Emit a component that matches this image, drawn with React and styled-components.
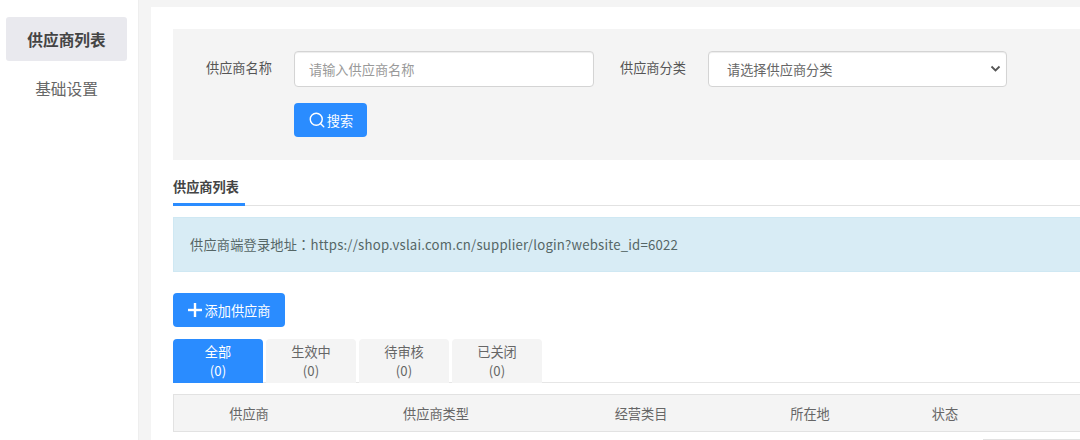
import React from "react";
import styled, { createGlobalStyle } from "styled-components";
import { Search } from "lucide-react";

const Global = createGlobalStyle`
  html, body {
    margin: 0;
    padding: 0;
    background: #f4f4f4;
    overflow: hidden;
  }
  * { box-sizing: border-box; }
`;

const Page = styled.div`
  display: flex;
  width: 1080px;
  height: 440px;
  overflow: hidden;
  font-family: "Noto Sans CJK SC", "Liberation Sans", sans-serif;
  color: #555;
`;

const Sidebar = styled.nav`
  flex: 0 0 139px;
  background: #fff;
  border-right: 1px solid #eee;
  padding: 17px 11px 0 6px;
`;

const NavItem = styled.div`
  height: 44px;
  margin-bottom: 5px;
  display: flex;
  align-items: center;
  justify-content: center;
  border-radius: 3px;
  font-size: 15.7px;
  font-weight: ${(p) => (p.$active ? 700 : 400)};
  color: ${(p) => (p.$active ? "#444" : "#666")};
  background: ${(p) => (p.$active ? "#e9e9ee" : "transparent")};
`;

const Main = styled.main`
  flex: 1;
  margin: 7px 0 0 12px;
  padding: 22px 0 0 22px;
  background: #fff;
  overflow: hidden;
`;

const FilterBox = styled.section`
  height: 131px;
  background: #f4f4f4;
  padding: 22px 0 0 33px;
`;

const FilterRow = styled.div`
  display: flex;
  align-items: center;
`;

const Label = styled.label`
  font-size: 13.2px;
  color: #555;
  width: ${(p) => p.$width}px;
  padding-left: ${(p) => p.$indent || 0}px;
  margin-top: -3px;
`;

const Field = styled.div`
  height: 36px;
  width: ${(p) => p.$width}px;
  background: #fff;
  border: 1px solid #d4d4d4;
  border-radius: 4px;
  box-shadow: inset 0 1px 1px rgba(0, 0, 0, 0.075);
  display: flex;
  align-items: center;
  font-size: 13.2px;
  padding: 0 ${(p) => p.$right || 14}px 0 ${(p) => p.$left}px;
  color: ${(p) => p.$color};
  justify-content: space-between;
`;

const PrimaryButton = styled.button`
  display: flex;
  align-items: center;
  justify-content: center;
  gap: ${(p) => p.$gap}px;
  width: ${(p) => p.$width}px;
  height: 34px;
  padding: 0;
  border: none;
  border-radius: 4px;
  background: #2a8cff;
  color: #fff;
  font-family: inherit;
  font-size: 13.2px;
`;

const SearchRow = styled.div`
  margin: 16px 0 0 88px;
`;

const TabBar = styled.div`
  height: 46px;
  border-bottom: 1px solid #e2e2e2;
  display: flex;
  align-items: flex-end;
`;

const Tab = styled.div`
  width: 72px;
  height: 33px;
  margin-bottom: -1px;
  border-bottom: 3px solid #2a8cff;
  font-size: 13.2px;
  font-weight: 700;
  color: #444;
  padding-top: 4px;
`;

const Notice = styled.div`
  height: 55px;
  margin-top: 11px;
  background: #d8ecf5;
  border: 1px solid #cfe8f3;
  border-right: none;
  padding-left: 16px;
  display: flex;
  align-items: center;
  font-size: 13.2px;
  color: #566;
  letter-spacing: 0.2px;
`;

// the colon sits in the middle of its cell in the reference, as in the JP cut
const Colon = styled.span`
  font-family: "Noto Sans CJK JP", sans-serif;
`;

const AddRow = styled.div`
  margin-top: 21px;
`;

const StatusTabs = styled.div`
  display: flex;
  gap: 3px;
  height: 44px;
  margin-top: 12px;
  border-bottom: 1px solid #e6e6e6;
`;

const StatusTab = styled.div`
  width: 90px;
  height: 44px;
  border-radius: 4px 4px 0 0;
  background: ${(p) => (p.$active ? "#2a8cff" : "#f4f4f4")};
  color: ${(p) => (p.$active ? "#fff" : "#666")};
  font-size: 13.2px;
  line-height: 19px;
  text-align: center;
  padding-top: 3px;
`;

const HeaderRow = styled.div`
  display: grid;
  grid-template-columns: 150px 224px 186px 152px 118px 1fr;
  height: 38px;
  margin-top: 11px;
  background: #f4f4f4;
  border: 1px solid #e2e2e2;
  border-right: none;
  align-items: center;
  font-size: 13.2px;
  color: #666;
`;

const HeaderCell = styled.div`
  text-align: center;
  padding-top: 1px;
`;

const BodyRow = styled.div`
  display: flex;
  justify-content: flex-end;
  padding-top: 7px;
`;

const ActionBox = styled.div`
  width: 97px;
  height: 30px;
  border: 1px solid #e2e2e2;
  border-right: none;
  background: #fff;
`;

const Chevron = () => (
  <svg width="11" height="8" viewBox="0 0 11 8" fill="none" stroke="#555" strokeWidth="1.8">
    <path d="M1.5 1.5 L5.5 5.5 L9.5 1.5" />
  </svg>
);

const PlusIcon = () => (
  <svg width="14" height="14" viewBox="0 0 14 14" fill="#fff">
    <rect x="0" y="5.8" width="14" height="2.4" />
    <rect x="5.8" y="0" width="2.4" height="14" />
  </svg>
);

const statuses = [
  { name: "全部", count: 0, active: true },
  { name: "生效中", count: 0 },
  { name: "待审核", count: 0 },
  { name: "已关闭", count: 0 },
];

const columns = ["供应商", "供应商类型", "经营类目", "所在地", "状态", ""];

const App = () => {
  return (
    <>
      <Global />
      <Page>
        <Sidebar>
          <NavItem $active>供应商列表</NavItem>
          <NavItem>基础设置</NavItem>
        </Sidebar>
        <Main>
          <FilterBox>
            <FilterRow>
              <Label $width={88}>供应商名称</Label>
              <Field $width={300} $left={14} $color="#999">请输入供应商名称</Field>
              <Label $width={114} $indent={26}>供应商分类</Label>
              <Field $width={299} $left={18} $right={5} $color="#666">
                请选择供应商分类
                <Chevron />
              </Field>
            </FilterRow>
            <SearchRow>
              <PrimaryButton $width={73} $gap={1}>
                <Search size={18} strokeWidth={1.9} />
                搜索
              </PrimaryButton>
            </SearchRow>
          </FilterBox>

          <TabBar>
            <Tab>供应商列表</Tab>
          </TabBar>

          <Notice>
            <span>供应商端登录地址<Colon>：</Colon>https://shop.vslai.com.cn/supplier/login?website_id=6022</span>
          </Notice>

          <AddRow>
            <PrimaryButton $width={112} $gap={3}>
              <PlusIcon />
              添加供应商
            </PrimaryButton>
          </AddRow>

          <StatusTabs>
            {statuses.map((s) => (
              <StatusTab key={s.name} $active={s.active}>
                {s.name}
                <br />({s.count})
              </StatusTab>
            ))}
          </StatusTabs>

          <HeaderRow>
            {columns.map((c, i) => (
              <HeaderCell key={i}>{c}</HeaderCell>
            ))}
          </HeaderRow>

          <BodyRow>
            <ActionBox />
          </BodyRow>
        </Main>
      </Page>
    </>
  );
};

export default App;
